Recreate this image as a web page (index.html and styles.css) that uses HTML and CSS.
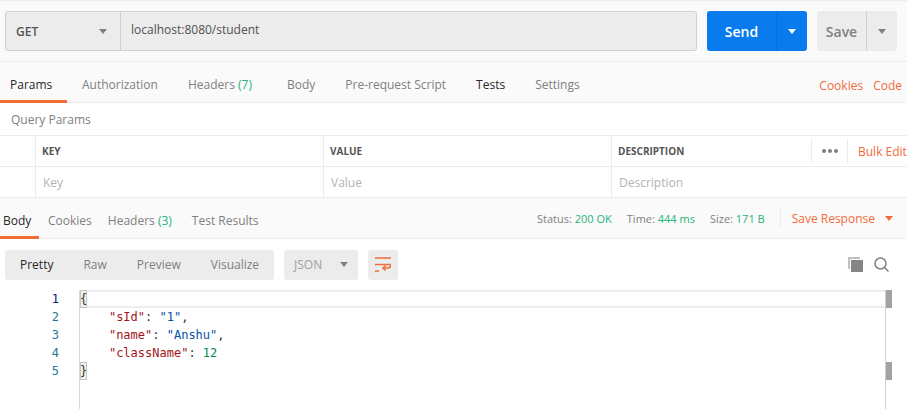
FILE: index.html
```html
<!DOCTYPE html>
<html lang="en">
<head>
<meta charset="utf-8">
<title>Postman</title>
<link rel="stylesheet" href="styles.css">
</head>
<body>
<section class="request-bar">
  <div class="url-group">
    <div class="method"><span>GET</span><i class="caret caret-grey"></i></div>
    <div class="url">localhost:8080/student</div>
  </div>
  <div class="split send"><span class="split-label">Send</span><span class="split-arrow"><i class="caret caret-white"></i></span></div>
  <div class="split save"><span class="split-label">Save</span><span class="split-arrow"><i class="caret caret-grey"></i></span></div>
</section>
<nav class="tabs req-tabs">
  <a class="tab active">Params</a>
  <a class="tab">Authorization</a>
  <a class="tab">Headers <em>(7)</em></a>
  <a class="tab">Body</a>
  <a class="tab">Pre-request Script</a>
  <a class="tab dark">Tests</a>
  <a class="tab">Settings</a>
  <span class="links"><a>Cookies</a><a>Code</a></span>
</nav>
<div class="query-title">Query Params</div>
<div class="kv head">
  <div class="cell check"></div>
  <div class="cell">KEY</div>
  <div class="cell">VALUE</div>
  <div class="cell desc">DESCRIPTION
    <span class="actions"><span class="dots"><b></b><b></b><b></b></span><a>Bulk Edit</a></span>
  </div>
</div>
<div class="kv row">
  <div class="cell check"></div>
  <div class="cell">Key</div>
  <div class="cell">Value</div>
  <div class="cell">Description</div>
</div>
<nav class="tabs res-tabs">
  <a class="tab active">Body</a>
  <a class="tab">Cookies</a>
  <a class="tab">Headers <em>(3)</em></a>
  <a class="tab">Test Results</a>
  <div class="meta">
    <span>Status: <em>200 OK</em></span>
    <span>Time: <em>444 ms</em></span>
    <span>Size: <em>171 B</em></span>
    <a class="save-res">Save Response<i class="caret caret-orange"></i></a>
  </div>
</nav>
<div class="toolbar">
  <div class="modes">
    <a class="mode on">Pretty</a><a class="mode">Raw</a><a class="mode">Preview</a><a class="mode">Visualize</a>
  </div>
  <div class="lang"><span>JSON</span><i class="caret caret-grey"></i></div>
  <div class="wrap">
    <svg width="16" height="16" viewBox="0 0 16 16" fill="none" stroke="#f26b3a" stroke-width="1.6"><path d="M0 1h16M0 7.5h15.500q.5 3.500-3 3.500H8M0 14h4"/><path d="M10.500 8.500L8 11l2.500 2.500"/></svg>
  </div>
  <div class="tools">
    <svg width="15" height="15" viewBox="0 0 15 15"><path d="M1 12V1h11" fill="none" stroke="#aaa" stroke-width="1.5"/><path d="M3 3h12v12H3z" fill="#858585"/></svg>
    <svg width="15" height="15" viewBox="0 0 15 15" fill="none" stroke="#808080" stroke-width="1.5"><circle cx="6.500" cy="6.500" r="5.500"/><path d="M10.500 10.500L14.500 14.500"/></svg>
  </div>
</div>
<div class="editor">
  <div class="gutter"><div class="current">1</div><div>2</div><div>3</div><div>4</div><div>5</div></div>
  <div class="code">
    <div class="active-line"></div>
    <div class="line"><span class="match">{</span></div>
    <div class="line">    <span class="k">"sId"</span>: <span class="s">"1"</span>,</div>
    <div class="line">    <span class="k">"name"</span>: <span class="s">"Anshu"</span>,</div>
    <div class="line">    <span class="k">"className"</span>: <span class="n">12</span></div>
    <div class="line"><span class="match">}</span></div>
    <div class="track"></div>
    <div class="mark mark-a"></div>
    <div class="mark mark-b"></div>
  </div>
</div>
</body>
</html>
```
FILE: styles.css
```css
* { box-sizing: border-box; }
html, body { margin: 0; height: 100%; }
body {
  width: 907px;
  height: 409px;
  overflow: hidden;
  background: #fff;
  font-family: "Open Sans", sans-serif;
  font-size: 12px;
  color: #808080;
}
em { font-style: normal; color: #26b47f; }
a { display: block; }

.caret { display: block; width: 0; height: 0; border-left: 4px solid transparent; border-right: 4px solid transparent; border-top: 5px solid #808080; }
.caret-white { border-top-color: #fff; }
.caret-orange { border-top-color: #f26b3a; }

.request-bar {
  display: flex;
  height: 62px;
  padding: 11px 10px 0 5px;
  background: #fafafa;
  border-top: 1px solid #ececec;
  border-bottom: 1px solid #ececec;
  margin-top: 0;
}
.request-bar { padding-top: 10px; }
.url-group {
  display: flex;
  width: 694px;
  height: 40px;
  border: 1px solid #d0d0d0;
  border-radius: 3px;
  background: #ececec;
  font-size: 12px;
}
.method {
  width: 115px;
  flex: none;
  display: flex;
  align-items: center;
  justify-content: space-between;
  padding: 0 10px;
  border-right: 1px solid #d0d0d0;
  font-weight: 600;
  color: #555;
}
.method .caret { margin-right: 3px; }
.url { padding: 0 0 0 10px; line-height: 36px; color: #505050; }

.split {
  display: flex;
  height: 40px;
  border-radius: 3px;
  font-size: 14px;
  font-weight: 600;
}
.split-label { display: flex; align-items: center; justify-content: center; height: 100%; }
.split-arrow { display: flex; align-items: center; justify-content: center; height: 100%; }
.send { width: 100px; margin-left: 10px; background: #097bed; color: #fff; }
.send .split-label { width: 69px; }
.send .split-arrow { width: 31px; border-left: 1px solid #0a6fd4; }
.save { width: 80px; margin-left: 10px; background: #ececec; color: #808080; }
.save .split-label { width: 49px; }
.save .split-arrow { width: 31px; border-left: 1px solid #d0d0d0; }

.tabs {
  display: flex;
  background: #fafafa;
  border-bottom: 1px solid #ececec;
}
.tab { white-space: pre; }
.tab.active { color: #282828; border-bottom: 3px solid #f26b3a; }
.tab.dark { color: #282828; }

.req-tabs { height: 41px; align-items: flex-start; }
.req-tabs .tab { height: 41px; line-height: 45px; margin-left: 30px; }
.req-tabs .tab:nth-child(1) { margin-left: 0; width: 67px; padding-left: 10px; }
.req-tabs .tab:nth-child(2) { margin-left: 15px; }
.req-tabs .tab:nth-child(4) { margin-left: 35px; }
.links { display: flex; gap: 10px; margin-left: auto; padding: 15px 5px 0 0; color: #f26b3a; }

.query-title { height: 33px; padding: 9px 0 0 11px; line-height: 16px; border-bottom: 1px solid #ececec; }

.kv { display: grid; grid-template-columns: 35px 288px 288px 1fr; border-bottom: 1px solid #ececec; }
.head { height: 31px; font-size: 10px; font-weight: 700; color: #555; }
.row { height: 31px; color: #b3b3b3; background: #fff; }
.cell { display: flex; align-items: center; padding-left: 6px; border-right: 0; border-left: 1px solid #ececec; position: relative; }
.cell.check { border-left: 0; }
.row .cell { padding-left: 7px; }
.actions { display: flex; align-items: center; margin-left: auto; font-size: 12px; font-weight: 400; color: #f26b3a; height: 24px; }
.dots { display: flex; gap: 2px; width: 37px; height: 24px; align-items: center; justify-content: center; border-left: 1px solid #ececec; border-right: 1px solid #ececec; }
.dots b { width: 4px; height: 4px; border-radius: 50%; background: #808080; }
.actions a { width: 59px; padding-left: 10px; }

.res-tabs { height: 41px; background: #fafafa; align-items: flex-start; }
.res-tabs .tab { height: 41px; line-height: 45px; margin-left: 16px; }
.res-tabs .tab:nth-child(1) { margin-left: 0; width: 39px; padding-left: 3px; }
.res-tabs .tab:nth-child(2) { margin-left: 9px; }
.res-tabs .tab:nth-child(4) { margin-left: 20px; }
.meta { display: flex; margin-left: auto; height: 40px; align-items: center; font-size: 11px; color: #808080; white-space: pre; padding-right: 14px; }
.meta > span { margin-left: 15px; }
.save-res { display: flex; align-items: center; height: 20px; margin-left: 15px; padding-left: 11px; border-left: 1px solid #ececec; font-size: 12px; color: #f26b3a; }
.save-res .caret { margin-left: 10px; }

.toolbar { display: flex; align-items: center; height: 51px; padding: 0 0 0 5px; }
.modes { display: flex; width: 269px; height: 30px; background: #ececec; border-radius: 3px; padding-left: 15px; align-items: center; }
.mode { margin-right: 30px; }
.mode.on { color: #282828; }
.lang { display: flex; align-items: center; justify-content: space-between; width: 74px; height: 30px; margin-left: 10px; padding: 0 10px; background: #ececec; border-radius: 3px; color: #a0a0a0; }
.wrap { display: flex; align-items: center; justify-content: center; width: 30px; height: 30px; margin-left: 10px; background: #ececec; border-radius: 3px; }
.tools { display: flex; gap: 11px; margin-left: auto; padding-right: 18px; }

.editor { display: flex; font-family: "DejaVu Sans Mono", monospace; font-size: 12px; line-height: 18px; }
.gutter { width: 79px; padding-right: 20px; text-align: right; color: #237893; }
.current { color: #0b216f; }
.code { position: relative; flex: 1; border-left: 1px solid #d8d8d8; height: 119px; margin-top: 0; }
.line { position: relative; white-space: pre; height: 18px; color: #333; }
.active-line { position: absolute; left: 0; top: 0; right: 18px; height: 18px; border-top: 2px solid #eeeeee; border-bottom: 2px solid #eeeeee; border-right: 2px solid #eeeeee; }
.match { display: inline-block; height: 18px; background: #eef3ee; outline: 1px solid #c0c8c0; outline-offset: -1px; }
.k { color: #a31515; }
.s { color: #0451a5; }
.n { color: #09885a; }
.track { position: absolute; top: 0; bottom: 0; left: 805px; width: 1px; background: #d0d0d0; }
.mark { position: absolute; left: 806px; width: 6px; height: 18px; background: #a3a3a3; }
.mark-a { top: 0; }
.mark-b { top: 72px; }
```
